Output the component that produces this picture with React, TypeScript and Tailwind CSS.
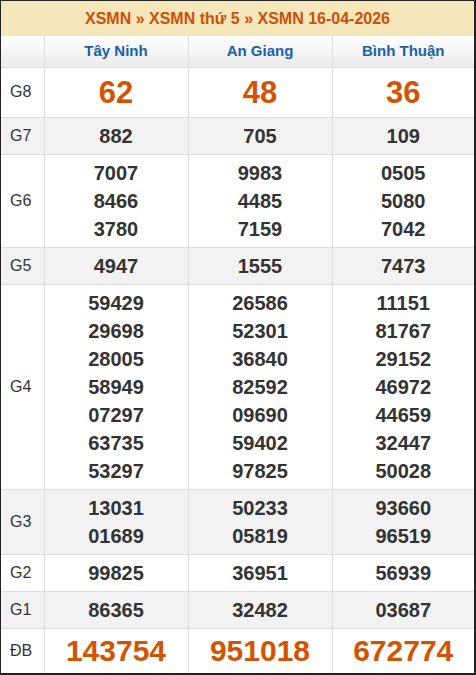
const provinces = ['Tây Ninh', 'An Giang', 'Bình Thuận'];

type Row = { label: string; values: string[][]; gray?: boolean; big?: 'g8' | 'db' };

const rows: Row[] = [
  { label: 'G8', values: [['62'], ['48'], ['36']], big: 'g8' },
  { label: 'G7', values: [['882'], ['705'], ['109']], gray: true },
  {
    label: 'G6',
    values: [
      ['7007', '8466', '3780'],
      ['9983', '4485', '7159'],
      ['0505', '5080', '7042'],
    ],
  },
  { label: 'G5', values: [['4947'], ['1555'], ['7473']], gray: true },
  {
    label: 'G4',
    values: [
      ['59429', '29698', '28005', '58949', '07297', '63735', '53297'],
      ['26586', '52301', '36840', '82592', '09690', '59402', '97825'],
      ['11151', '81767', '29152', '46972', '44659', '32447', '50028'],
    ],
  },
  {
    label: 'G3',
    values: [
      ['13031', '01689'],
      ['50233', '05819'],
      ['93660', '96519'],
    ],
    gray: true,
  },
  { label: 'G2', values: [['99825'], ['36951'], ['56939']] },
  { label: 'G1', values: [['86365'], ['32482'], ['03687']], gray: true },
  { label: 'ĐB', values: [['143754'], ['951018'], ['672774']], big: 'db' },
];

export default function App() {
  return (
    <div
      className="w-[476px] h-[675px] bg-white border-t border-l border-b-2 border-r-2 border-[#222]"
      style={{ fontFamily: '"Liberation Sans", Arial, sans-serif' }}
    >
      <div className="h-[35px] bg-[#f6e7bb] flex items-center justify-center text-[16px] font-bold text-[#cf4f06]">
        XSMN » XSMN thứ 5 » XSMN 16-04-2026
      </div>
      <table className="w-full table-fixed border-collapse">
        <colgroup>
          <col className="w-[43px]" />
          <col className="w-[144px]" />
          <col className="w-[144px]" />
          <col />
        </colgroup>
        <thead>
          <tr className="h-[31px] bg-gradient-to-b from-white to-[#ebebeb]">
            <th className="border-r border-[#ddd]" />
            {provinces.map((p, i) => (
              <th
                key={p}
                className={`text-[15px] font-bold text-[#1761ab] ${i < 2 ? 'border-r border-[#ddd]' : ''}`}
              >
                {p}
              </th>
            ))}
          </tr>
        </thead>
        <tbody>
          {rows.map((row) => (
            <tr key={row.label} className={`border-t border-[#ddd] ${row.gray ? 'bg-[#f2f2f2]' : 'bg-white'}`}>
              <td className="border-r border-[#ddd] pl-[9px] text-left text-[16px] text-[#333] align-middle">
                {row.label}
              </td>
              {row.values.map((vals, i) => (
                <td
                  key={i}
                  className={`text-center align-middle py-[4px] font-bold ${i < 2 ? 'border-r border-[#ddd]' : ''} ${
                    row.big === 'g8'
                      ? 'text-[31px] leading-[41px] text-[#d35400]'
                      : row.big === 'db'
                        ? 'text-[30px] leading-[36px] text-[#d35400]'
                        : 'text-[20px] leading-[28px] text-[#333]'
                  }`}
                >
                  {vals.map((v) => (
                    <div key={v}>{v}</div>
                  ))}
                </td>
              ))}
            </tr>
          ))}
        </tbody>
      </table>
    </div>
  );
}
